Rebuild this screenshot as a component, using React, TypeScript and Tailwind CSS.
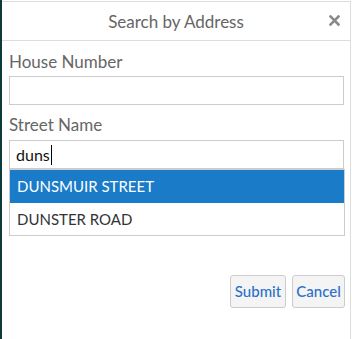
import React from 'react';

const App = () => {
    return (
        <div className="flex h-[339px] w-[352px] overflow-hidden bg-white font-['Lato',sans-serif]">
            {/* dark page edge showing behind the dialog */}
            <div className="w-[2px] shrink-0 bg-[#0b3a3a]" />

            <div className="w-[349px] shrink-0 pt-[1px]">
                <div className="h-[400px] border-t border-r border-[#dddddd]">
                    {/* Header */}
                    <div className="relative flex h-[39px] items-center justify-center border-b border-[#dddddd]">
                        <span className="text-[17px] leading-none text-[#666666]">Search by Address</span>
                        <svg className="absolute right-[10px] top-[13px]" width="11" height="11" viewBox="0 0 11 11">
                            <path d="M1.5 1.5 L9.5 9.5 M9.5 1.5 L1.5 9.5" stroke="#8a8a8a" strokeWidth="2.6" strokeLinecap="square" />
                        </svg>
                    </div>

                    {/* Body */}
                    <div className="px-[7px] pt-[9px]">
                        <label className="block text-[17px] leading-[24px] text-[#666666]">House Number</label>
                        <input className="mt-[2px] block h-[29px] w-[335px] border border-[#cccccc] px-[6px] text-[16px] outline-none" />

                        <label className="mt-[8px] block text-[17px] leading-[24px] text-[#666666]">Street Name</label>
                        <div className="mt-[3px] flex h-[29px] w-[335px] items-center border border-[#cccccc] px-[6px] text-[16px] text-[#111111]">
                            duns<span className="ml-[1px] inline-block h-[20px] w-[1px] bg-black" />
                        </div>

                        <div className="w-[336px] border border-[#cccccc] text-[15px]">
                            <div className="flex h-[33px] items-center bg-[#1a7bc9] px-[7px] text-white">DUNSMUIR STREET</div>
                            <div className="flex h-[32px] items-center px-[7px] text-[#333333]">DUNSTER ROAD</div>
                        </div>

                        <div className="mt-[39px] flex w-[336px] justify-end gap-[6px]">
                            <button className="h-[33px] w-[56px] rounded-[3px] border border-[#cccccc] bg-[#f4f4f4] text-[15px] font-medium text-[#2a6fc9]">Submit</button>
                            <button className="h-[33px] w-[53px] rounded-[3px] border border-[#cccccc] bg-[#f4f4f4] text-[15px] font-medium text-[#2a6fc9]">Cancel</button>
                        </div>
                    </div>
                </div>
            </div>
        </div>
    );
};

export default App;
